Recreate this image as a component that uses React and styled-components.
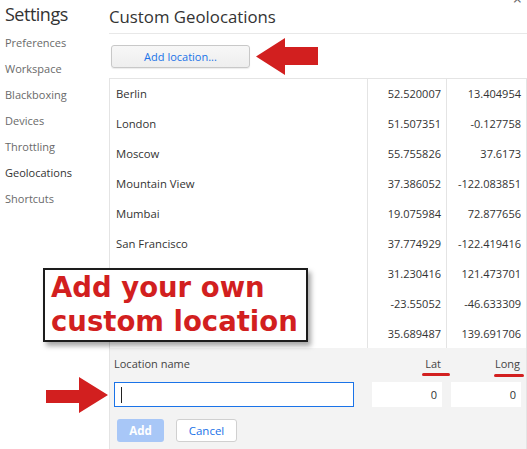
import React from 'react'
import styled, { createGlobalStyle } from 'styled-components'

const LOCATIONS = [
  { name: 'Berlin', lat: '52.520007', long: '13.404954' },
  { name: 'London', lat: '51.507351', long: '-0.127758' },
  { name: 'Moscow', lat: '55.755826', long: '37.6173' },
  { name: 'Mountain View', lat: '37.386052', long: '-122.083851' },
  { name: 'Mumbai', lat: '19.075984', long: '72.877656' },
  { name: 'San Francisco', lat: '37.774929', long: '-122.419416' },
  { name: 'Shanghai', lat: '31.230416', long: '121.473701' },
  { name: 'São Paulo', lat: '-23.55052', long: '-46.633309' },
  { name: 'Tokyo', lat: '35.689487', long: '139.691706' },
]

const NAV = [
  'Preferences',
  'Workspace',
  'Blackboxing',
  'Devices',
  'Throttling',
  'Geolocations',
  'Shortcuts',
]

const RED = '#d21f1f'
const BLUE = '#1a73e8'
const FONT = '"Open Sans", "Noto Sans", sans-serif'

const GlobalStyle = createGlobalStyle`
  html, body {
    margin: 0;
    padding: 0;
    background: #fff;
  }
  body {
    font-family: ${FONT};
    color: #333;
    overflow: hidden;
  }
  * {
    box-sizing: border-box;
  }
`

export default function App() {
  return (
    <Page>
      <GlobalStyle />

      <Sidebar>
        <SidebarTitle>Settings</SidebarTitle>
        {NAV.map((item) => (
          <NavItem key={item} active={item === 'Geolocations'}>
            {item}
          </NavItem>
        ))}
      </Sidebar>

      <Main>
        <Header>
          <Heading>Custom Geolocations</Heading>
          <CloseGlyph>×</CloseGlyph>
        </Header>

        <ButtonRow>
          <AddLocationButton>Add location...</AddLocationButton>
        </ButtonRow>

        <ListBox>
          <Table>
            {LOCATIONS.map((x) => (
              <Row key={x.name}>
                <NameCell>{x.name}</NameCell>
                <NumberCell>{x.lat}</NumberCell>
                <NumberCell>{x.long}</NumberCell>
              </Row>
            ))}
          </Table>

          <Editor>
            <FieldLabel>Location name</FieldLabel>
            <FieldLabel align="right">
              Lat
              <Underline style={{ width: 28, right: -9 }} />
            </FieldLabel>
            <FieldLabel align="right">
              Long
              <Underline style={{ width: 30, right: -4, top: 18 }} />
            </FieldLabel>

            <NameInput>
              <Caret />
            </NameInput>
            <NumberInput>0</NumberInput>
            <NumberInput>0</NumberInput>

            <EditorButtons>
              <PrimaryButton>Add</PrimaryButton>
              <SecondaryButton>Cancel</SecondaryButton>
            </EditorButtons>
          </Editor>
        </ListBox>
      </Main>

      <Callout>
        Add your own
        <br />
        custom location
      </Callout>

      <TopArrow width="62" height="37" viewBox="0 0 62 37">
        <polygon points="0,18.5 29,0 29,9 62,9 62,27 29,27 29,37" fill={RED} />
      </TopArrow>

      <SideArrow width="62" height="36" viewBox="0 0 62 36">
        <polygon points="62,18 33,0 33,13 0,13 0,26 33,26 33,36" fill={RED} />
      </SideArrow>
    </Page>
  )
}

const Page = styled.div`
  position: relative;
  display: flex;
  width: 527px;
  height: 449px;
  overflow: hidden;
`

const Sidebar = styled.div`
  width: 109px;
  flex-shrink: 0;
  padding-left: 5px;
`

const SidebarTitle = styled.div`
  height: 30px;
  padding-top: 2px;
  font-size: 18px;
  letter-spacing: -0.5px;
  line-height: 24px;
  color: #333;
`

const NavItem = styled.div`
  height: 26px;
  line-height: 26px;
  font-size: 11px;
  color: ${(p) => (p.active ? '#333' : '#6a6a6a')};
`

const Main = styled.div`
  flex: 1;
  display: flex;
  flex-direction: column;
  min-width: 0;
`

const Header = styled.div`
  position: relative;
  height: 34px;
  border-bottom: 1px solid #e8e8e8;
`

const Heading = styled.div`
  font-size: 16.8px;
  line-height: 33px;
  color: #333;
`

const CloseGlyph = styled.span`
  position: absolute;
  top: -12px;
  right: 5px;
  font-size: 16px;
  color: #666;
`

const ButtonRow = styled.div`
  height: 44px;
  padding: 10px 0 0 2px;
`

const AddLocationButton = styled.button`
  width: 139px;
  height: 23px;
  border: 1px solid #c8c8c8;
  border-radius: 3px;
  background: linear-gradient(#f7f7f7, #eeeeee);
  box-shadow: 0 1px 1px rgba(0, 0, 0, 0.08);
  color: ${BLUE};
  font-family: ${FONT};
  font-size: 11px;
  padding: 0;
`

const ListBox = styled.div`
  flex: 1;
  display: flex;
  flex-direction: column;
  border-left: 1px solid #e4e4e4;
  border-right: 1px solid #e4e4e4;
`

const Table = styled.div`
  border-top: 1px solid #e4e4e4;
`

const Row = styled.div`
  display: grid;
  grid-template-columns: 257px 79px 1fr;
  height: 29.9px;
  align-items: stretch;
  font-size: 11.3px;
  color: #333;
`

const NameCell = styled.div`
  display: flex;
  align-items: center;
  padding-left: 6px;
`

const NumberCell = styled.div`
  display: flex;
  align-items: center;
  justify-content: flex-end;
  padding-right: 5px;
  border-left: 1px solid #e4e4e4;
  font-size: 11px;
`

const Editor = styled.div`
  flex: 1;
  display: grid;
  grid-template-columns: 249px 79px 79px;
  grid-template-rows: 16px 25px auto;
  row-gap: 10px;
  justify-items: stretch;
  align-content: start;
  padding: 8px 5px 0 4px;
  background: #f3f3f3;
`

const FieldLabel = styled.div`
  position: relative;
  justify-self: ${(p) => (p.align === 'right' ? 'end' : 'start')};
  margin-right: ${(p) => (p.align === 'right' ? '1px' : '0')};
  font-size: 11px;
  line-height: 16px;
  color: #444;
`

const Underline = styled.span`
  position: absolute;
  top: 17px;
  height: 3px;
  border-radius: 2px;
  background: ${RED};
`

const NameInput = styled.div`
  width: 240px;
  height: 25px;
  display: flex;
  align-items: center;
  padding-left: 6px;
  background: #fff;
  border: 1px solid ${BLUE};
`

const Caret = styled.span`
  width: 1px;
  height: 16px;
  background: #222;
`

const NumberInput = styled.div`
  justify-self: end;
  width: 70px;
  height: 25px;
  display: flex;
  align-items: center;
  justify-content: flex-end;
  padding-right: 5px;
  background: #fff;
  font-size: 11px;
  color: #333;
`

const EditorButtons = styled.div`
  grid-column: 1 / -1;
  display: flex;
  gap: 12px;
  margin-top: 2px;
  padding-left: 3px;
`

const BaseButton = styled.button`
  height: 23px;
  border-radius: 3px;
  font-family: ${FONT};
  font-size: 11.5px;
  padding: 0;
`

const PrimaryButton = styled(BaseButton)`
  width: 47px;
  border: none;
  background: #a8c7f7;
  color: #fff;
  font-weight: bold;
`

const SecondaryButton = styled(BaseButton)`
  width: 61px;
  border: 1px solid #d0d0d0;
  background: #fff;
  color: ${BLUE};
`

const Callout = styled.div`
  position: absolute;
  left: 43px;
  top: 268px;
  width: 265px;
  height: 74px;
  padding: 0 0 0 6px;
  border: 2px solid #1c1c1c;
  background: #fff;
  box-shadow: 3px 4px 5px rgba(0, 0, 0, 0.35);
  color: ${RED};
  font-family: "DejaVu Sans", sans-serif;
  font-weight: bold;
  font-size: 27.5px;
  line-height: 34px;
  white-space: nowrap;
`

const TopArrow = styled.svg`
  position: absolute;
  left: 256px;
  top: 38px;
`

const SideArrow = styled.svg`
  position: absolute;
  left: 46px;
  top: 377px;
`
